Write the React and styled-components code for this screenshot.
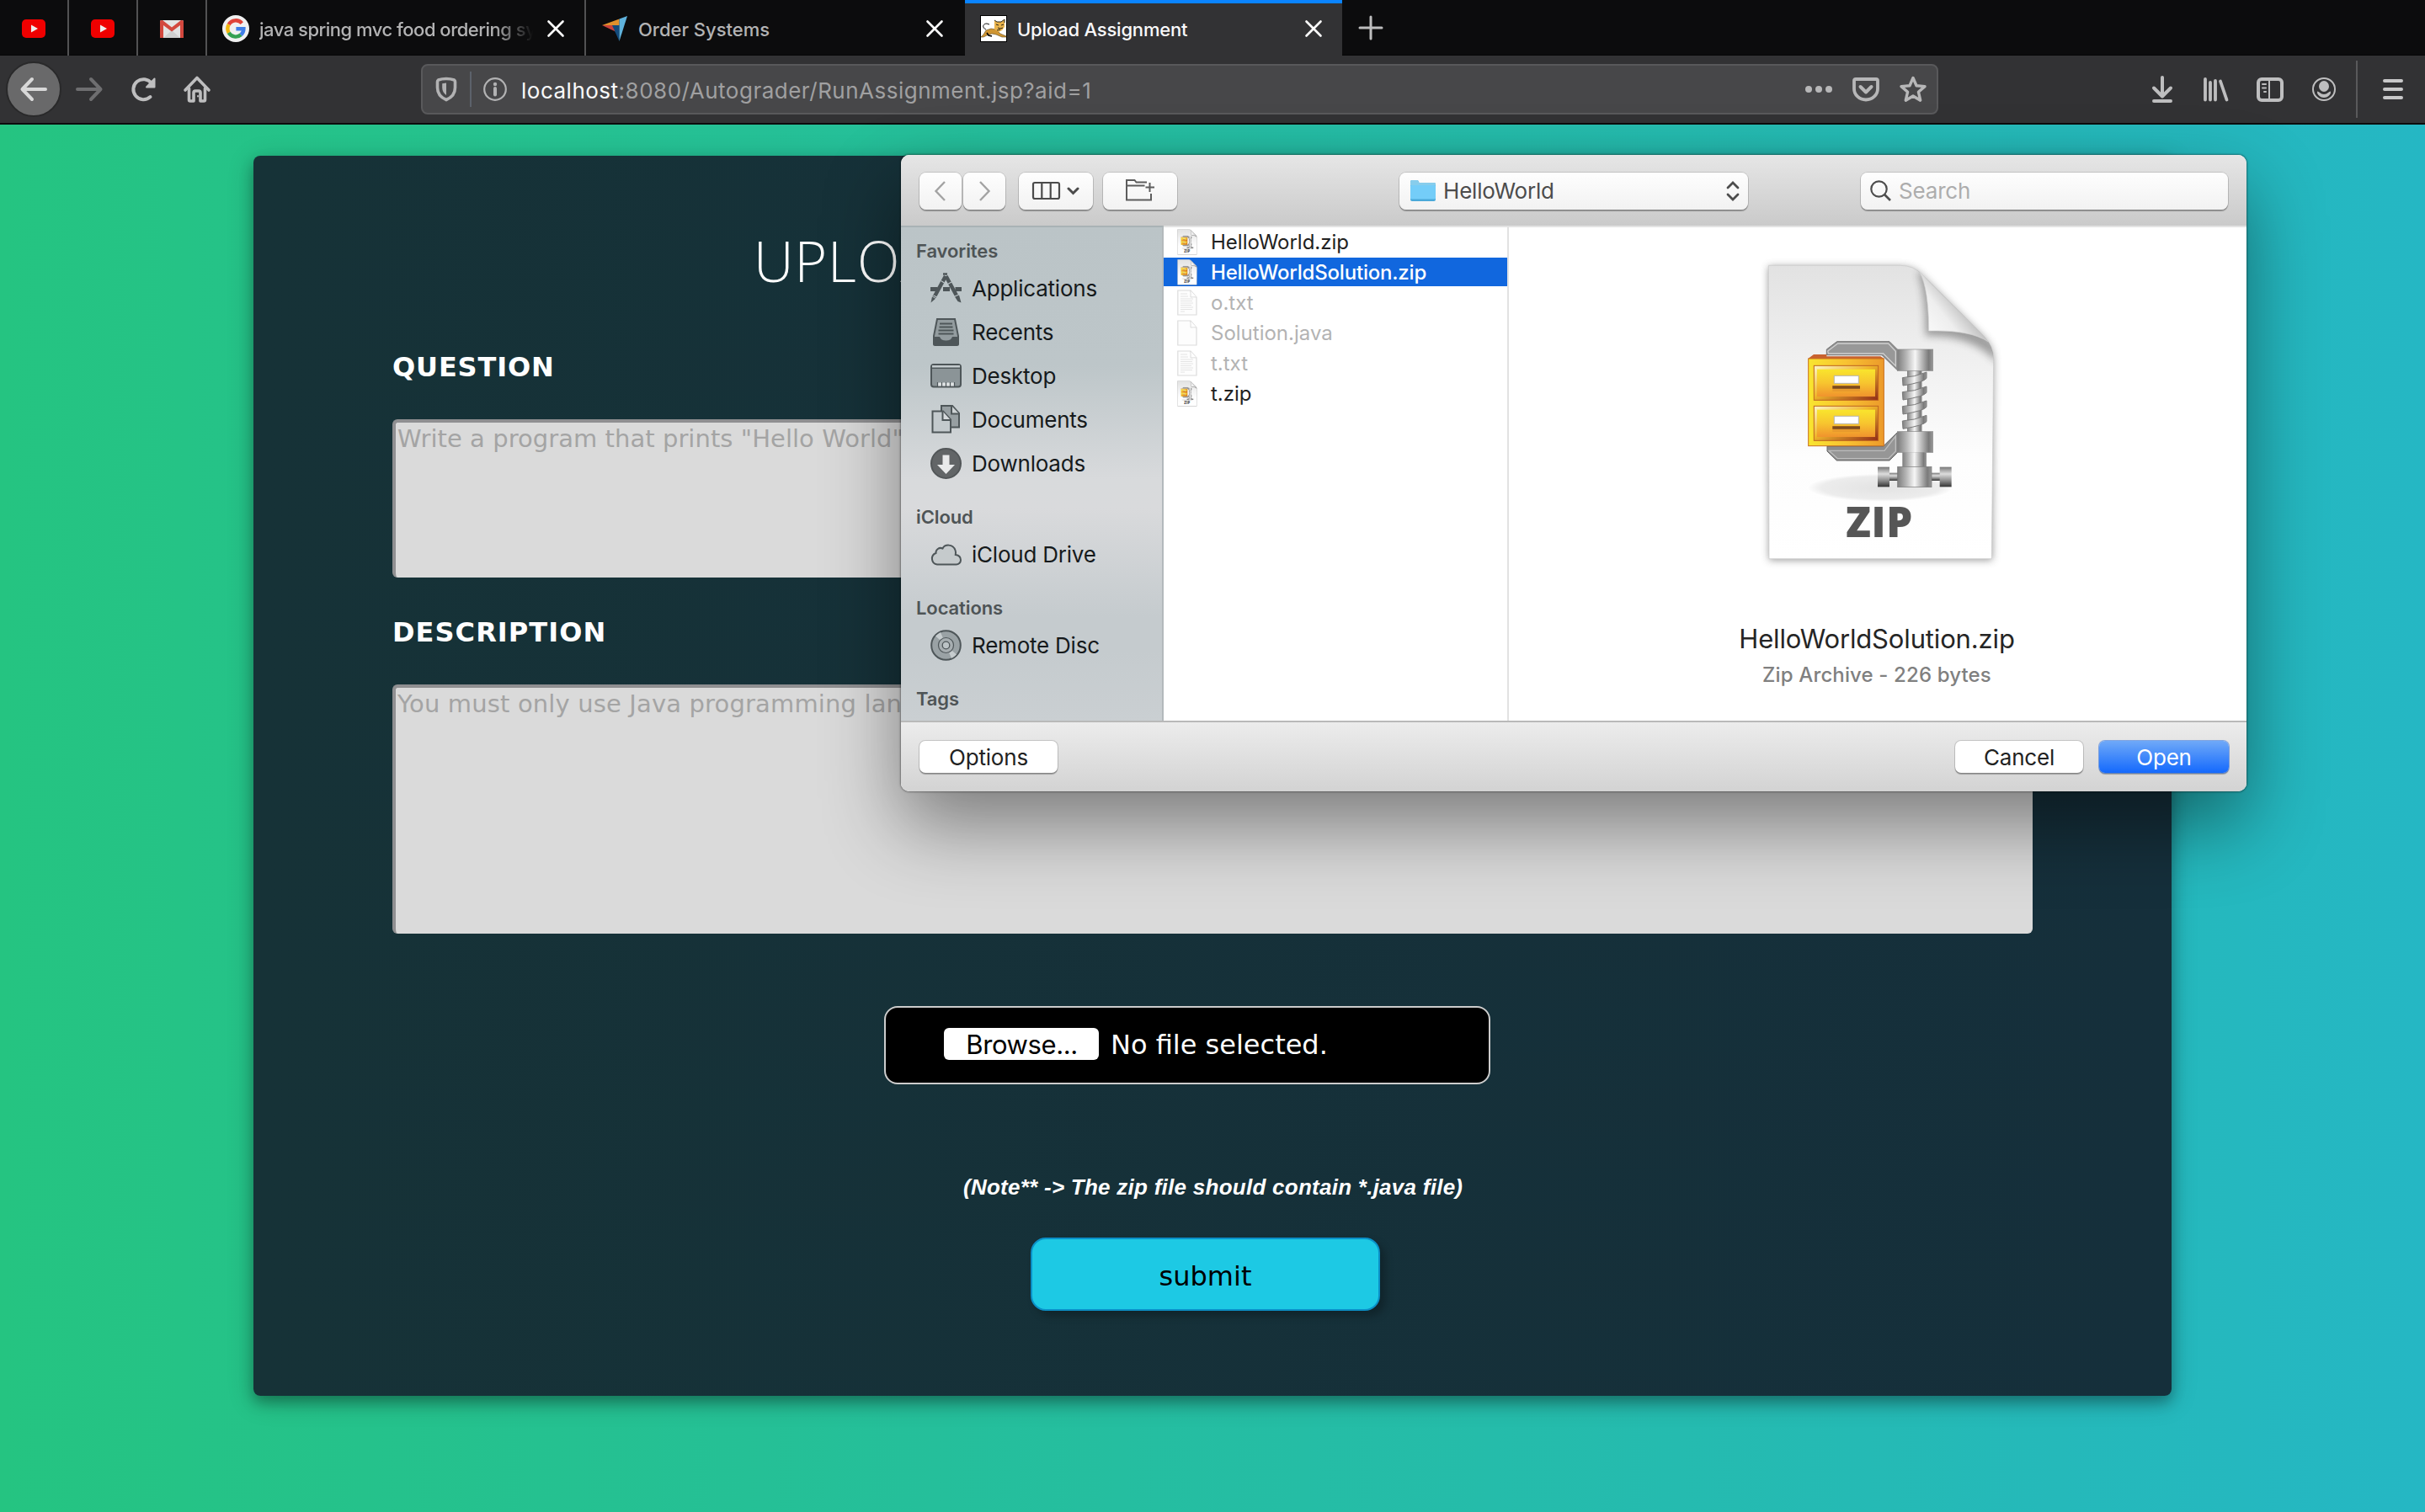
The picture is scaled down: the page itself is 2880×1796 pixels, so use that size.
import React from 'react';
import styled, { createGlobalStyle, css } from 'styled-components';

const ui = '"Inter", "Liberation Sans", sans-serif';
const verdana = '"DejaVu Sans", Verdana, sans-serif';

const GlobalStyle = createGlobalStyle`
  * { box-sizing: border-box; }
  html, body { margin: 0; padding: 0; background: #25b7c4; }
  body { overflow: hidden; }
  button { font: inherit; margin: 0; padding: 0; border: 0; background: none; }
  svg { display: block; flex: none; overflow: visible; }
`;

const Screen = styled.div`
  position: relative;
  display: flex;
  flex-direction: column;
  width: 2880px;
  height: 1796px;
  overflow: hidden;
  font-family: ${ui};
`;

/* ---------- browser chrome ---------- */

const TabStrip = styled.div`
  display: flex;
  height: 66px;
  background: #0c0c0d;
  border-bottom: 1px solid #050506;
`;

const PinnedTab = styled.div`
  display: flex;
  align-items: center;
  justify-content: center;
  width: ${p => p.$width}px;
  height: 66px;
  padding-top: 2px;
  border-right: 2px solid #525253;
`;

const Tab = styled.div`
  display: flex;
  align-items: center;
  width: ${p => p.$width}px;
  height: 66px;
  padding: 2px ${p => p.$end || 24}px 0 18px;
  color: ${p => (p.$active ? '#f9f9fa' : '#b3b3b4')};
  background: ${p => (p.$active ? '#323234' : 'transparent')};
  box-shadow: ${p => (p.$active ? 'inset 0 4px 0 #0a84ff' : 'none')};
  border-right: ${p => (p.$divided ? '2px solid #525253' : '0')};
`;

const TabTitle = styled.div`
  flex: 1;
  min-width: 0;
  margin: 2px 10px 0 12px;
  overflow: hidden;
  white-space: nowrap;
  font-size: 22px;
  font-weight: 500;
  line-height: 30px;
  letter-spacing: ${p => p.$spacing || 0}px;
  ${p => p.$fade && css`mask-image: linear-gradient(to right, #000 84%, transparent 98%);`}
`;

const NewTab = styled.button`
  display: flex;
  align-items: center;
  padding-left: 20px;
`;

const NavBar = styled.div`
  display: flex;
  align-items: center;
  height: 82px;
  padding: 0 26px 0 7px;
  background: #323234;
  border-bottom: 2px solid #0c0c0d;
`;

const NavGroup = styled.div`
  display: flex;
  align-items: center;
  gap: ${p => p.$gap}px;
`;

const ToolGroup = styled(NavGroup)`
  margin-left: auto;
`;

const BackButton = styled.button`
  display: flex;
  align-items: center;
  justify-content: center;
  width: 66px;
  height: 66px;
  border: 2px solid #29292a;
  border-radius: 50%;
  background: #69696a;
`;

const AddressBar = styled.div`
  display: flex;
  align-items: center;
  width: 1802px;
  height: 60px;
  margin-left: 250px;
  padding: 0 12px 0 15px;
  border: 2px solid #59595b;
  border-radius: 8px;
  background: #474749;
`;

const AddressDivider = styled.div`
  width: 2px;
  height: 42px;
  margin: 0 14px 0 15px;
  background: #5c626b;
`;

const Url = styled.div`
  flex: 1;
  margin-left: 17px;
  padding-top: 3px;
  color: #a0a0a1;
  font-size: 26px;
  line-height: 36px;
  letter-spacing: 0.5px;
  white-space: nowrap;
`;

const UrlHost = styled.span`
  color: #f9f9fa;
`;

const MenuDivider = styled.div`
  width: 2px;
  height: 68px;
  margin: 0 30px 0 22px;
  background: #59595b;
`;

/* ---------- web page ---------- */

const Page = styled.main`
  flex: 1;
  padding: 37px 0 0 301px;
  background: linear-gradient(to right, #25c481, #25b7c4);
`;

const Card = styled.div`
  display: flex;
  flex-direction: column;
  align-items: flex-start;
  width: 2278px;
  height: 1473px;
  padding: 84px 165px 0;
  border-radius: 8px;
  background: linear-gradient(to right, #163237, #152f3b);
  box-shadow: 0 8px 16px rgba(0, 0, 0, 0.28), 0 6px 32px rgba(0, 0, 0, 0.2);
  font-family: ${verdana};
  color: #fff;
`;

const Title = styled.h1`
  margin: 0 0 67px 429px;
  font-family: "Open Sans", sans-serif;
  font-size: 66px;
  font-weight: 330;
  line-height: 80px;
  letter-spacing: 1px;
  white-space: nowrap;
`;

const Label = styled.h2`
  margin: 0;
  font-size: 32px;
  font-weight: 700;
  line-height: 40px;
  letter-spacing: ${p => p.$spacing}px;
`;

const Area = styled.div`
  width: 1948px;
  height: ${p => p.$height}px;
  margin: ${p => p.$margin};
  padding: 0 0 0 2px;
  border: 0 solid #8f8f91;
  border-width: 4px 0 0 4px;
  border-radius: 6px;
  background: #dadada;
  color: #a4a4a4;
  font-size: 29px;
  line-height: ${p => p.$line}px;
  letter-spacing: ${p => p.$spacing}px;
  white-space: nowrap;
  overflow: hidden;
`;

const FileField = styled.div`
  display: flex;
  align-items: center;
  width: 720px;
  height: 93px;
  margin: 86px 0 0 584px;
  padding: 0 0 3px 69px;
  border: 2px solid #ccc;
  border-radius: 16px;
  background: #000;
  font-size: 32px;
  line-height: 40px;
`;

const Browse = styled.button`
  width: 184px;
  height: 38px;
  margin: 0 14px 0 0;
  padding: 1px 0 0 1px;
  border-radius: 6px;
  background: #fff;
  color: #000;
  font-family: ${ui};
  font-size: 31px;
  line-height: 37px;
  letter-spacing: -0.4px;
`;

const FileName = styled.span`
  padding-top: 2px;
`;

const Note = styled.p`
  margin: 102px 0 40px 678px;
  font-family: "Liberation Sans", sans-serif;
  font-size: 26px;
  font-weight: 700;
  font-style: italic;
  line-height: 40px;
  letter-spacing: 0.26px;
`;

const Submit = styled.button`
  width: 415px;
  height: 87px;
  margin-left: 758px;
  padding-top: 4px;
  border: 2px solid #0a90c8;
  border-radius: 18px;
  background: #1dc9e4;
  box-shadow: 6px 6px 10px rgba(0, 0, 0, 0.25);
  color: #000;
  font-size: 32px;
`;

/* ---------- open-file dialog ---------- */

const DialogShadow = styled.div`
  position: absolute;
  left: 1070px;
  top: 184px;
  width: 1598px;
  height: 756px;
  border-radius: 10px;
  box-shadow: 0 0 2px 1px rgba(0, 0, 0, 0.35), 0 40px 90px rgba(0, 0, 0, 0.43);
`;

const Dialog = styled.section`
  display: flex;
  flex-direction: column;
  width: 100%;
  height: 100%;
  border-radius: 10px;
  overflow: hidden;
  background: #fff;
`;

const DialogBar = styled.header`
  display: flex;
  align-items: center;
  flex: none;
  height: 84px;
  padding: 1px 22px 0;
  background: linear-gradient(#e6e6e6, #cacaca);
`;

const ToolButton = styled.button`
  display: flex;
  align-items: center;
  justify-content: center;
  gap: 8px;
  width: ${p => p.$width}px;
  height: 44px;
  margin-right: ${p => p.$after}px;
  border-radius: 8px;
  background: linear-gradient(#fefefe, #f2f2f2);
  box-shadow: 0 0 0 1px rgba(0, 0, 0, 0.13), 0 2px 1px rgba(0, 0, 0, 0.28);
`;

const FieldBox = styled.div`
  display: flex;
  align-items: center;
  width: ${p => p.$width}px;
  height: 44px;
  margin-left: ${p => p.$before}px;
  padding: ${p => p.$pad};
  border-radius: 8px;
  background: linear-gradient(#fefefe, #f2f2f2);
  box-shadow: 0 0 0 1px rgba(0, 0, 0, 0.13), 0 2px 1px rgba(0, 0, 0, 0.28);
`;

const FieldText = styled.span`
  flex: 1;
  margin-left: 9px;
  padding-top: 1px;
  color: ${p => p.$color};
  font-size: 26px;
  line-height: 36px;
  letter-spacing: -0.18px;
`;

const Browser = styled.div`
  display: flex;
  flex: 1;
  min-height: 0;
`;

const Sidebar = styled.nav`
  display: flex;
  flex-direction: column;
  gap: 20px;
  width: 312px;
  padding: 10px 0 0 18px;
  overflow: hidden;
  border-top: 2px solid #a9b2b5;
  border-right: 2px solid #b3b9bc;
  background: linear-gradient(#bbc4c7 0, #bdc6c9 28%, #d8dadc 51%, #d9dadc 57%, #c5cbce 79%, #c5cbce 86%, #cacfd2 100%);
`;

const GroupTitle = styled.h3`
  margin: 0;
  color: #4e5456;
  font-size: 22px;
  font-weight: 600;
  line-height: 36px;
  letter-spacing: -0.1px;
`;

const Place = styled.div`
  display: flex;
  align-items: center;
  gap: 12px;
  height: 52px;
  padding-left: 17px;
  color: #161a1c;
  font-size: 26px;
  line-height: 40px;
  letter-spacing: -0.22px;
  white-space: nowrap;
`;

const RowText = styled.span`
  padding-top: 2px;
`;

const FileList = styled.div`
  width: 410px;
  border-top: 2px solid #e3e3e3;
  border-right: 2px solid #e2e2e2;
`;

const FileRow = styled.div`
  display: flex;
  align-items: center;
  gap: 16px;
  height: 34px;
  margin-bottom: 2px;
  padding-left: 16px;
  background: ${p => (p.$selected ? '#1167de' : 'transparent')};
  color: ${p => (p.$selected ? '#fff' : p.$dim ? '#b3b3b3' : '#222')};
  font-size: 24px;
  font-weight: ${p => (p.$selected ? 500 : 400)};
  letter-spacing: ${p => (p.$selected ? -0.2 : 0)}px;
  line-height: 30px;
  white-space: nowrap;
`;

const Preview = styled.div`
  display: flex;
  flex-direction: column;
  align-items: center;
  flex: 1;
  padding: 10px 2px 0 0;
  border-top: 2px solid #e3e3e3;
`;

const PreviewName = styled.div`
  margin-top: 37px;
  color: #252525;
  font-size: 31px;
  line-height: 44px;
  letter-spacing: -0.15px;
`;

const PreviewInfo = styled.div`
  margin-top: 5px;
  color: #808080;
  font-size: 24px;
  font-weight: 500;
  line-height: 32px;
  letter-spacing: 0.13px;
`;

const DialogFooter = styled.footer`
  display: flex;
  align-items: center;
  flex: none;
  height: 84px;
  padding: 0 21px 0 22px;
  border-top: 2px solid #b9b9b9;
  background: linear-gradient(#ececec, #d3d3d3);
`;

const PushButton = styled.button`
  width: ${p => p.$width}px;
  height: 38px;
  margin-left: ${p => p.$before || 0};
  padding-top: 2px;
  border-radius: 7px;
  background: ${p => (p.$primary ? 'linear-gradient(#6fa9f8, #1469fd)' : '#fff')};
  box-shadow: 0 0 0 1px ${p => (p.$primary ? 'rgba(30,100,220,.5)' : 'rgba(0,0,0,.14)')}, 0 2px 1px rgba(0, 0, 0, 0.28);
  color: ${p => (p.$primary ? '#fff' : '#222')};
  font-size: 26px;
  line-height: 36px;
  letter-spacing: -0.2px;
`;

/* ---------- icons ---------- */

const YouTube = () => (
  <svg width="28" height="22" viewBox="0 0 28 22">
    <rect width="28" height="22" rx="5" fill="#f00000" />
    <path d="M11 6.5v9l8-4.5z" fill="#eee" />
  </svg>
);

const Gmail = () => (
  <svg width="28" height="21" viewBox="0 0 28 21">
    <rect width="28" height="21" rx="1.5" fill="#e3e3e3" />
    <path d="M4 21L14 12l10 9z" fill="#cfcfcf" />
    <path d="M0 1.5V21h4V6l10 7.500L24 6v15h4V1.500Q28 0 26 0h-1L14 8.500 3 0H2Q0 0 0 1.500z" fill="#d3483e" />
  </svg>
);

const Google = () => (
  <svg width="32" height="32" viewBox="0 0 32 32">
    <circle cx="16" cy="16" r="16" fill="#f1f1f1" />
    <g fill="none" strokeWidth="4.400">
      <path d="M23.300 9.600A9.600 9.600 0 0 0 7.700 11.200" stroke="#e0443a" />
      <path d="M7.700 11.200a9.600 9.600 0 0 0 0 9.600" stroke="#f3b80f" />
      <path d="M7.700 20.800a9.600 9.600 0 0 0 14.500 2.500" stroke="#34a152" />
      <path d="M22.200 23.300A9.600 9.600 0 0 0 25.400 16.200H16.400" stroke="#3f7ee8" />
    </g>
  </svg>
);

const Arrowhead = () => (
  <svg width="32" height="30" viewBox="-1 0 32 30">
    <path d="M0 11L20.500 3.500V11z" fill="#e0902c" />
    <path d="M0 11h13l4 8z" fill="#c8413c" />
    <path d="M12 11h8.500v19z" fill="#124a7c" />
    <path d="M30 0L20.500 3.500V30z" fill="#5fb2dc" />
  </svg>
);

const Tomcat = () => (
  <svg width="32" height="32" viewBox="0 0 32 32">
    <rect x=".5" y=".5" width="31" height="31" fill="#fff" stroke="#000" />
    <path d="M1 26l3-3 3-5 6-2 6 1 5 5 7 3v1h-5l-7-3-5-1-6 2-4 2z" fill="#cf9532" stroke="#5e4a20" strokeWidth=".6" />
    <path d="M17 6l3 2h5l4-3v9l-3 4-4 2-5-3z" fill="#e8b24b" />
    <path d="M17 6l3 2h5l4-3v4M19 11l3 1M25 12l3-1M21 15l3 1 3-1M20 18l4-1" stroke="#2a2416" strokeWidth="1" fill="none" />
    <path d="M7 17c-5-2-4-7 1-7l3 1" stroke="#111" strokeWidth="1" fill="none" />
    <path d="M8 21l2 3 4 1" stroke="#000" strokeWidth="1.600" fill="none" />
  </svg>
);

const Close = () => (
  <svg width="20" height="20" viewBox="0 0 20 20">
    <path d="M1.500 1.500l17 17M18.500 1.500l-17 17" stroke="#fff" strokeWidth="2.600" strokeLinecap="round" />
  </svg>
);

const Plus = () => (
  <svg width="28" height="28" viewBox="0 0 28 28">
    <path d="M14 1v26M1 14h26" stroke="#bdbdbe" strokeWidth="3" strokeLinecap="round" />
  </svg>
);

const Glyph = ({ size = 32, color = '#bebebf', width = 4, children }) => (
  <svg width={size} height={size} viewBox="0 0 32 32" fill="none" stroke={color} strokeWidth={width} strokeLinecap="round" strokeLinejoin="round">
    {children}
  </svg>
);

const Back = () => <Glyph color="#d8d8d8"><path d="M30 16H3M14 4L2.500 16 14 28" /></Glyph>;
const Forward = () => <Glyph color="#6e6e70"><path d="M2 16h27M18 4l11.500 12L18 28" /></Glyph>;
const Reload = () => (
  <Glyph>
    <path d="M24.500 25A12 12 0 1 1 26 9" />
    <path d="M29.500 3.500v10h-9.500z" fill="#bebebf" strokeWidth="2" />
  </Glyph>
);
const Home = () => (
  <Glyph width={3.6}>
    <path d="M2 17L16 2.500 30 17" />
    <path d="M6.500 15v13.500q0 1.500 1.500 1.500h4V20q0-2 2-2h4q2 0 2 2v10h4q1.500 0 1.500-1.500V15" />
    <path d="M17 24v.5" strokeWidth="2" />
  </Glyph>
);
const Shield = () => (
  <svg width="26" height="30" viewBox="0 0 26 30">
    <path d="M13 2.500c4 0 7.500.8 9.500 1.500q1 .5 1 2v7c0 7-4.500 12-10.500 14.500C7 25 2.500 20 2.500 13V6q0-1.500 1-2C5.500 3.300 9 2.500 13 2.500z" fill="none" stroke="#b2b2b3" strokeWidth="3.600" />
    <path d="M13 7.500v14.500c-3-2-4.800-5-4.800-9V8.200z" fill="#b2b2b3" />
  </svg>
);
const Info = () => (
  <svg width="28" height="28" viewBox="0 0 28 28">
    <circle cx="14" cy="14" r="12.800" fill="none" stroke="#b2b2b3" strokeWidth="2.200" />
    <circle cx="14" cy="8" r="2.200" fill="#b2b2b3" />
    <path d="M14 13v7.500" stroke="#b2b2b3" strokeWidth="4" strokeLinecap="round" />
  </svg>
);
const Dots = () => (
  <svg width="32" height="8" viewBox="0 0 32 8" fill="#b7b7b8"><circle cx="4" cy="4" r="4" /><circle cx="16" cy="4" r="4" /><circle cx="28" cy="4" r="4" /></svg>
);
const Pocket = () => (
  <Glyph color="#b7b7b8" width={3.8}>
    <path d="M4 4h24q2 0 2 2v9.500a14 13 0 0 1-28 0V6q0-2 2-2z" />
    <path d="M9.500 13l6.500 6.500L22.500 13" strokeWidth="4" />
  </Glyph>
);
const Star = () => (
  <Glyph color="#b7b7b8" width={3.4}>
    <path d="M16 2.500l4 9.200 10 .9-7.600 6.600 2.300 10L16 24l-8.700 5.200 2.300-10L2 12.600l10-.9z" />
  </Glyph>
);
const Download = () => (
  <Glyph><path d="M16 2v21M6 14.500L16 24.500 26 14.500M6 30h20" /></Glyph>
);
const Library = () => (
  <Glyph width={3.8}><path d="M3 4v24.500M9 8v20.500M15 6v22.500M21 6.500L28.500 28.500" /></Glyph>
);
const SidebarIcon = () => (
  <Glyph width={4}>
    <rect x="2" y="4" width="28" height="25" rx="4" />
    <path d="M15 4v25" strokeWidth="2" />
    <path d="M7 10h4M7 14.500h4M9 19h2" strokeWidth="2" />
  </Glyph>
);
const Account = () => (
  <Glyph width={2}>
    <circle cx="16" cy="16" r="13" />
    <ellipse cx="16" cy="12.500" rx="6" ry="6.500" fill="#bebebf" stroke="none" />
    <path d="M8 18.500q1.500 0 3 1.500 2 2 5 2t5-2q1.500-1.500 3-1.500.5 2-1.500 4.500-2.500 3-6.500 3t-6.500-3Q7.500 20.500 8 18.500z" fill="#bebebf" stroke="none" />
  </Glyph>
);
const Hamburger = () => (
  <svg width="24" height="24" viewBox="0 0 24 24" stroke="#c8c8c9" strokeWidth="4" strokeLinecap="round"><path d="M2 2h20M2 12h20M2 22h20" /></svg>
);

const Chevron = ({ flip }) => (
  <svg width="16" height="26" viewBox="0 0 16 26" fill="none" stroke="#a3a3a3" strokeWidth="2.400">
    <path d={flip ? 'M3 2l10.500 11L3 24' : 'M13 2L2.500 13 13 24'} />
  </svg>
);
const Columns = () => (
  <svg width="33" height="21" viewBox="0 0 33 21" fill="none" stroke="#4b4b4b" strokeWidth="2.200"><rect x="1" y="1" width="31" height="19" rx="2" /><path d="M11.300 1v19M21.700 1v19" /></svg>
);
const ChevronDown = () => (
  <svg width="15" height="10" viewBox="0 0 15 10" fill="none" stroke="#4b4b4b" strokeWidth="3" strokeLinecap="round"><path d="M2 2l5.500 5.500L13 2" /></svg>
);
const NewFolder = () => (
  <svg width="34" height="30" viewBox="0 -1 34 30" fill="none" stroke="#5d5d5d" strokeWidth="2">
    <path d="M25 3.500H12.500L10.500 1H1v23.500h29V17M1 7.500h21.500M28.500 4v11M23.500 9.500h10.500" />
  </svg>
);
const Folder = () => (
  <svg width="30" height="25" viewBox="0 0 30 25">
    <path d="M0 2q0-2 2-2h6q1.500 0 2.500 3H28q2 0 2 2v18q0 2-2 2H2q-2 0-2-2z" fill="#4aa9d9" />
    <path d="M0 2q0-2 2-2h6q1.500 0 2.500 3H28q2 0 2 2v1H0z" fill="#87cdec" />
    <rect y="6" width="30" height="16.500" rx="1" fill="#74cdf8" />
  </svg>
);
const UpDown = () => (
  <svg width="16" height="24" viewBox="0 0 16 24" fill="none" stroke="#4d4d4d" strokeWidth="2.800" strokeLinecap="round"><path d="M2 8l6-6 6 6M2 16l6 6 6-6" /></svg>
);
const Magnifier = () => (
  <svg width="25" height="25" viewBox="0 0 25 25" fill="none" stroke="#4d4d4d" strokeWidth="2.200"><circle cx="10.500" cy="10.500" r="9.200" /><path d="M17 17l7 7" strokeWidth="2.600" /></svg>
);

const PlaceSvg = ({ children }) => (
  <svg width="37" height="37" viewBox="0 0 37 37" fill="none" stroke="#4e5659" strokeWidth="2">{children}</svg>
);
const placeIcons = {
  applications: (
    <PlaceSvg>
      <path d="M0 19.500h8.500M15 19.500h8M29.500 19.500H37" strokeWidth="5" />
      <path d="M18 4L4.500 29" strokeWidth="4.600" />
      <path d="M18.500 4l13 24" strokeWidth="4.600" />
      <path d="M2 28.500l4 2.200L.5 35.500z" fill="#4e5659" stroke="none" />
      <path d="M29 28.500l5-2 2.500 9-4-1.500z" fill="#4e5659" stroke="none" />
      <path d="M15 1.500h5" strokeWidth="2.500" />
      <path d="M12.500 9.500l4 2.500M25 11l-4.500 2.500M3.500 27l4.500 2M33.500 26l-5 2.300" stroke="#bcc5c8" strokeWidth="1.200" />
    </PlaceSvg>
  ),
  recents: (
    <PlaceSvg>
      <path d="M8 3h21l4 20v9.500q0 1.500-1.500 1.500h-26Q4 34 4 32.500V23z" fill="#939c9f" />
      <path d="M3.500 24H11q1.500 4.500 7.500 4.500T26 24h7.500v8.500q0 1.500-1.500 1.500H5q-1.500 0-1.500-1.500z" fill="#4e5659" stroke="none" />
      <path d="M11 8.500h15M10.500 12.500h16M9.500 16.500h18M9.500 20.500h18" />
    </PlaceSvg>
  ),
  desktop: (
    <PlaceSvg>
      <rect x="1" y="5" width="35" height="26.500" rx="3" fill="#8b9497" />
      <path d="M2 7h33" stroke="#c5cccf" strokeWidth="2" /><path d="M1.500 9.500h34" strokeWidth="1.200" />
      <path d="M9 28.500h19" stroke="#dfe3e4" strokeWidth="4" />
      <path d="M13.500 26v5M18.500 26v5M23.500 26v5M8.500 26v5M28.500 26v5" strokeWidth="1.200" />
    </PlaceSvg>
  ),
  documents: (
    <PlaceSvg>
      <path d="M13 2h13l8 9v16.500H13z" fill="#979fa2" /><path d="M25 2v9.500h9" fill="#cdd2d4" />
      <path d="M2.500 8.500H15l9 10v15H2.500z" fill="#c3cacd" /><path d="M14.500 8.500V19H24" fill="#d5d9db" />
    </PlaceSvg>
  ),
  downloads: (
    <PlaceSvg>
      <circle cx="18.500" cy="18.500" r="17.500" fill="#626567" stroke="#525658" />
      <path d="M14.500 8.500h8v11.500h6.500L18.500 31 8 20h6.500z" fill="#e9eaeb" stroke="none" />
    </PlaceSvg>
  ),
  icloud: (
    <PlaceSvg>
      <path d="M8 30.500a7 7 0 0 1-1.500-13.500c-.5-4 4-7.500 8-5.500 2.500-5 12-6 15 2 .8 2 .6 4 .3 5.500 3.500.5 6.200 2.800 6.200 6.200a5.300 5.300 0 0 1-5.500 5.300z" fill="#c5cacc" />
    </PlaceSvg>
  ),
  disc: (
    <PlaceSvg>
      <circle cx="18.500" cy="18.500" r="17.300" fill="#9aa2a5" />
      <path d="M18.500 18.500L6 7.500q3-3 6-4.500zM18.500 18.500L31 29.500q-3 3-6 4.500z" fill="#c6ccce" stroke="none" />
      <circle cx="18.500" cy="18.500" r="9" strokeWidth="1.200" fill="#a7aeb1" />
      <circle cx="18.500" cy="18.500" r="4.300" fill="#bcc3c6" strokeWidth="1.300" />
    </PlaceSvg>
  ),
};

const HiddenSvg = styled.svg`
  position: absolute;
  width: 0;
  height: 0;
`;

/* Archive document: drawn once, shown small in rows and large in the preview */
const ZipDefs = () => (
  <HiddenSvg>
    <defs>
      <linearGradient id="paper" x1="0" y1="0" x2="0" y2="1"><stop offset="0" stopColor="#e2e2e2" /><stop offset=".3" stopColor="#efefef" /><stop offset=".65" stopColor="#fdfdfd" /><stop offset="1" stopColor="#fff" /></linearGradient>
      <linearGradient id="curl" x1="0" y1="1" x2="1" y2=".2"><stop offset="0" stopColor="#fff" /><stop offset=".4" stopColor="#eee" /><stop offset=".75" stopColor="#a5a5a5" /><stop offset="1" stopColor="#ddd" /></linearGradient>
      <linearGradient id="steel" x1="0" y1="0" x2="1" y2="0"><stop offset="0" stopColor="#7d7d7d" /><stop offset=".25" stopColor="#b5b5b5" /><stop offset=".5" stopColor="#f6f6f6" /><stop offset=".7" stopColor="#b5b5b5" /><stop offset=".88" stopColor="#7a7a7a" /><stop offset="1" stopColor="#999" /></linearGradient>
      <linearGradient id="knob" x1="0" y1="0" x2="0" y2="1"><stop offset="0" stopColor="#777" /><stop offset=".35" stopColor="#ddd" /><stop offset=".7" stopColor="#888" /><stop offset="1" stopColor="#333" /></linearGradient>
      <linearGradient id="cabinet" x1="0" y1="0" x2="1" y2="0"><stop offset="0" stopColor="#f9e52f" /><stop offset=".5" stopColor="#f8c232" /><stop offset="1" stopColor="#ec9a2b" /></linearGradient>
      <linearGradient id="drawerEdge" x1="0" y1="0" x2="1" y2="1"><stop offset="0" stopColor="#fdf6c8" /><stop offset=".45" stopColor="#f0b62c" /><stop offset="1" stopColor="#8f2a17" /></linearGradient>
      <linearGradient id="drawer" x1="0" y1="0" x2="0" y2="1"><stop offset="0" stopColor="#f9e52d" /><stop offset=".5" stopColor="#f7c52f" /><stop offset="1" stopColor="#f0932d" /></linearGradient>
      <radialGradient id="floor"><stop offset="0" stopColor="#e3e3e3" /><stop offset=".8" stopColor="#ececec" /><stop offset="1" stopColor="#fff" /></radialGradient>
      <filter id="soft" x="-20%" y="-20%" width="140%" height="140%"><feGaussianBlur stdDeviation="14" /></filter>
      <clipPath id="sheet"><path d="M181 106H650Q700 106 730 140L950 360Q983 395 983 440L976 1151H183z" /></clipPath>
    </defs>
  </HiddenSvg>
);

const Drawer = ({ y }) => (
  <g>
    <rect x="343" y={y} width="229" height="123" fill="url(#drawerEdge)" stroke="#bf6420" strokeWidth="3" />
    <rect x="354" y={y + 13} width="207" height="97" fill="url(#drawer)" />
    <rect x="415" y={y + 36} width="87" height="27" fill="#fff" stroke="#b9b5ae" strokeWidth="3" />
    <rect x="409" y={y + 71} width="98" height="21" fill="#e89a2d" />
    <path d={`M409 ${y + 72}h98v10H409z`} fill="#7d4a1b" />
  </g>
);

const ZipDocument = ({ width, height, viewBox }) => (
  <svg width={width} height={height} viewBox={viewBox}>
    <path d="M181 110H650Q700 110 730 144L950 364Q983 400 983 444L978 1156H183z" fill="#555" opacity=".6" filter="url(#soft)" />
    <path d="M181 106H650Q700 106 730 140L950 360Q983 395 983 440L976 1151H183z" fill="url(#paper)" stroke="#c9c9c9" strokeWidth="2" />
    <g clipPath="url(#sheet)">
      <path d="M725 130Q752 200 752 345Q900 345 985 425L985 400 730 140z" fill="#333" stroke="#333" strokeWidth="24" opacity=".42" filter="url(#soft)" />
    </g>
    <path d="M720 130Q752 190 752 339Q900 335 965 378z" fill="url(#curl)" stroke="#d5d5d5" strokeWidth="2" />
    <ellipse cx="580" cy="898" rx="262" ry="50" fill="url(#floor)" />
    <path d="M388 405L425 377H612L641 406V480L585 425H388z" fill="#8f8f8f" stroke="#777" strokeWidth="3" />
    <path d="M392 411L428 384H608L634 412V464L590 420H394z" fill="#989898" stroke="#cfcfcf" strokeWidth="4" />
    <path d="M390 750H590L641 700V772L612 801H424L390 768z" fill="#8c8c8c" stroke="#666" strokeWidth="3" />
    <path d="M396 766H594L634 714V768L609 794H427z" fill="#969696" stroke="#bdbdbd" strokeWidth="4" />
    <rect x="675" y="470" width="53" height="240" fill="url(#steel)" />
    {[486, 537, 588, 640].map(y => (
      <path key={y} d={`M658 ${y + 20}Q700 ${y + 18} 744 ${y}v22Q735 ${y + 36} 660 ${y + 48}z`} fill="url(#steel)" stroke="#7b7b7b" strokeWidth="3" />
    ))}
    <rect x="640" y="405" width="127" height="76" fill="url(#steel)" stroke="#8a8a8a" strokeWidth="2" />
    <rect x="640" y="698" width="127" height="74" fill="url(#steel)" stroke="#8a8a8a" strokeWidth="2" />
    <rect x="658" y="772" width="86" height="52" fill="url(#steel)" />
    <rect x="600" y="845" width="200" height="28" fill="url(#knob)" />
    <rect x="570" y="824" width="42" height="71" fill="url(#knob)" />
    <rect x="791" y="824" width="42" height="71" fill="url(#knob)" />
    <rect x="641" y="823" width="121" height="73" fill="url(#steel)" stroke="#777" strokeWidth="2" />
    <path d="M322 438L342 423H388V430H580L593 438z" fill="#c8622f" />
    <rect x="323" y="438" width="269" height="311" fill="url(#cabinet)" stroke="#c8701f" strokeWidth="3" />
    <Drawer y={463} />
    <Drawer y={607} />
    <text x="576" y="1075" textAnchor="middle" fontFamily="'Open Sans', sans-serif" fontWeight="800" fontSize="147" letterSpacing="2" fill="#565656">ZIP</text>
  </svg>
);

const SmallZip = () => <ZipDocument width="24" height="31" viewBox="165 95 835 1078" />;

const PlainDoc = ({ lines }) => (
  <svg width="24" height="31" viewBox="0 0 24 31">
    <path d="M.8 1H16l7 8v21H.8z" fill="#fdfdfd" stroke="#dcdcdc" strokeWidth="1.200" />
    <path d="M15.500 1q1 3 .5 8 4-.5 7 0" fill="#fff" stroke="#dcdcdc" />
    {lines && <path d="M4 5h8M4 8h9M4 11h15M4 13.500h14M4 16h15M4 18.500h13M4 21h15M4 23.500h14M4 26h5" stroke="#e4e4e4" strokeWidth="1" />}
  </svg>
);

/* ---------- data ---------- */

const groups = [
  ['Favorites', [['applications', 'Applications'], ['recents', 'Recents'], ['desktop', 'Desktop'], ['documents', 'Documents'], ['downloads', 'Downloads']]],
  ['iCloud', [['icloud', 'iCloud Drive']]],
  ['Locations', [['disc', 'Remote Disc']]],
  ['Tags', []],
];

const files = [
  { name: 'HelloWorld.zip', kind: 'zip' },
  { name: 'HelloWorldSolution.zip', kind: 'zip', selected: true },
  { name: 'o.txt', kind: 'text' },
  { name: 'Solution.java', kind: 'blank' },
  { name: 't.txt', kind: 'text' },
  { name: 't.zip', kind: 'zip' },
];

const OpenDialog = () => (
  <DialogShadow>
    <Dialog>
      <DialogBar>
        <ToolButton $width={50} $after={2}><Chevron /></ToolButton>
        <ToolButton $width={50} $after={16}><Chevron flip /></ToolButton>
        <ToolButton $width={88} $after={12}><Columns /><ChevronDown /></ToolButton>
        <ToolButton $width={88} $after={0}><NewFolder /></ToolButton>
        <FieldBox $width={414} $before={264} $pad="0 10px 0 13px">
          <Folder />
          <FieldText $color="#4c4c4c">HelloWorld</FieldText>
          <UpDown />
        </FieldBox>
        <FieldBox $width={436} $before={134} $pad="0 11px">
          <Magnifier />
          <FieldText $color="#adadad">Search</FieldText>
        </FieldBox>
      </DialogBar>
      <Browser>
        <Sidebar>
          {groups.map(([title, places]) => (
            <div key={title}>
              <GroupTitle>{title}</GroupTitle>
              {places.map(([icon, name]) => (
                <Place key={name}>{placeIcons[icon]}<RowText>{name}</RowText></Place>
              ))}
            </div>
          ))}
        </Sidebar>
        <FileList>
          {files.map(f => (
            <FileRow key={f.name} $selected={f.selected} $dim={f.kind !== 'zip'}>
              {f.kind === 'zip' ? <SmallZip /> : <PlainDoc lines={f.kind === 'text'} />}
              <RowText>{f.name}</RowText>
            </FileRow>
          ))}
        </FileList>
        <Preview>
          <ZipDocument width="378" height="420" viewBox="0 0 1134 1260" />
          <PreviewName>HelloWorldSolution.zip</PreviewName>
          <PreviewInfo>Zip Archive - 226 bytes</PreviewInfo>
        </Preview>
      </Browser>
      <DialogFooter>
        <PushButton $width={164}>Options</PushButton>
        <PushButton $width={152} $before="auto">Cancel</PushButton>
        <PushButton $width={154} $before="19px" $primary>Open</PushButton>
      </DialogFooter>
    </Dialog>
  </DialogShadow>
);

export default function App() {
  return (
    <Screen>
      <GlobalStyle />
      <ZipDefs />
      <TabStrip>
        <PinnedTab $width={82}><YouTube /></PinnedTab>
        <PinnedTab $width={82}><YouTube /></PinnedTab>
        <PinnedTab $width={82}><Gmail /></PinnedTab>
        <Tab $width={450} $divided>
          <Google />
          <TabTitle $spacing={-0.5} $fade>java spring mvc food ordering system</TabTitle>
          <Close />
        </Tab>
        <Tab $width={450} $end={26}>
          <Arrowhead />
          <TabTitle>Order Systems</TabTitle>
          <Close />
        </Tab>
        <Tab $width={448} $active>
          <Tomcat />
          <TabTitle $spacing={-0.2}>Upload Assignment</TabTitle>
          <Close />
        </Tab>
        <NewTab><Plus /></NewTab>
      </TabStrip>
      <NavBar>
        <NavGroup $gap={17}>
          <BackButton><Back /></BackButton>
          <NavGroup $gap={32}><Forward /><Reload /><Home /></NavGroup>
        </NavGroup>
        <AddressBar>
          <Shield />
          <AddressDivider />
          <Info />
          <Url><UrlHost>localhost</UrlHost>:8080/Autograder/RunAssignment.jsp?aid=1</Url>
          <NavGroup $gap={24}><Dots /><Pocket /><Star /></NavGroup>
        </AddressBar>
        <ToolGroup $gap={32}><Download /><Library /><SidebarIcon /><Account /></ToolGroup>
        <MenuDivider />
        <Hamburger />
      </NavBar>
      <Page>
        <Card>
          <Title>UPLOAD ASSIGNMENT</Title>
          <Label $spacing={0.85}>QUESTION</Label>
          <Area $height={188} $margin="42px 0 45px" $line={39} $spacing={0.05}>Write a program that prints "Hello World"</Area>
          <Label $spacing={1.05}>DESCRIPTION</Label>
          <Area $height={296} $margin="42px 0 0" $line={38} $spacing={0.15}>You must only use Java programming language</Area>
          <FileField>
            <Browse>Browse...</Browse>
            <FileName>No file selected.</FileName>
          </FileField>
          <Note>{'(Note** -> The zip file should contain *.java file)'}</Note>
          <Submit>submit</Submit>
        </Card>
      </Page>
      <OpenDialog />
    </Screen>
  );
}
